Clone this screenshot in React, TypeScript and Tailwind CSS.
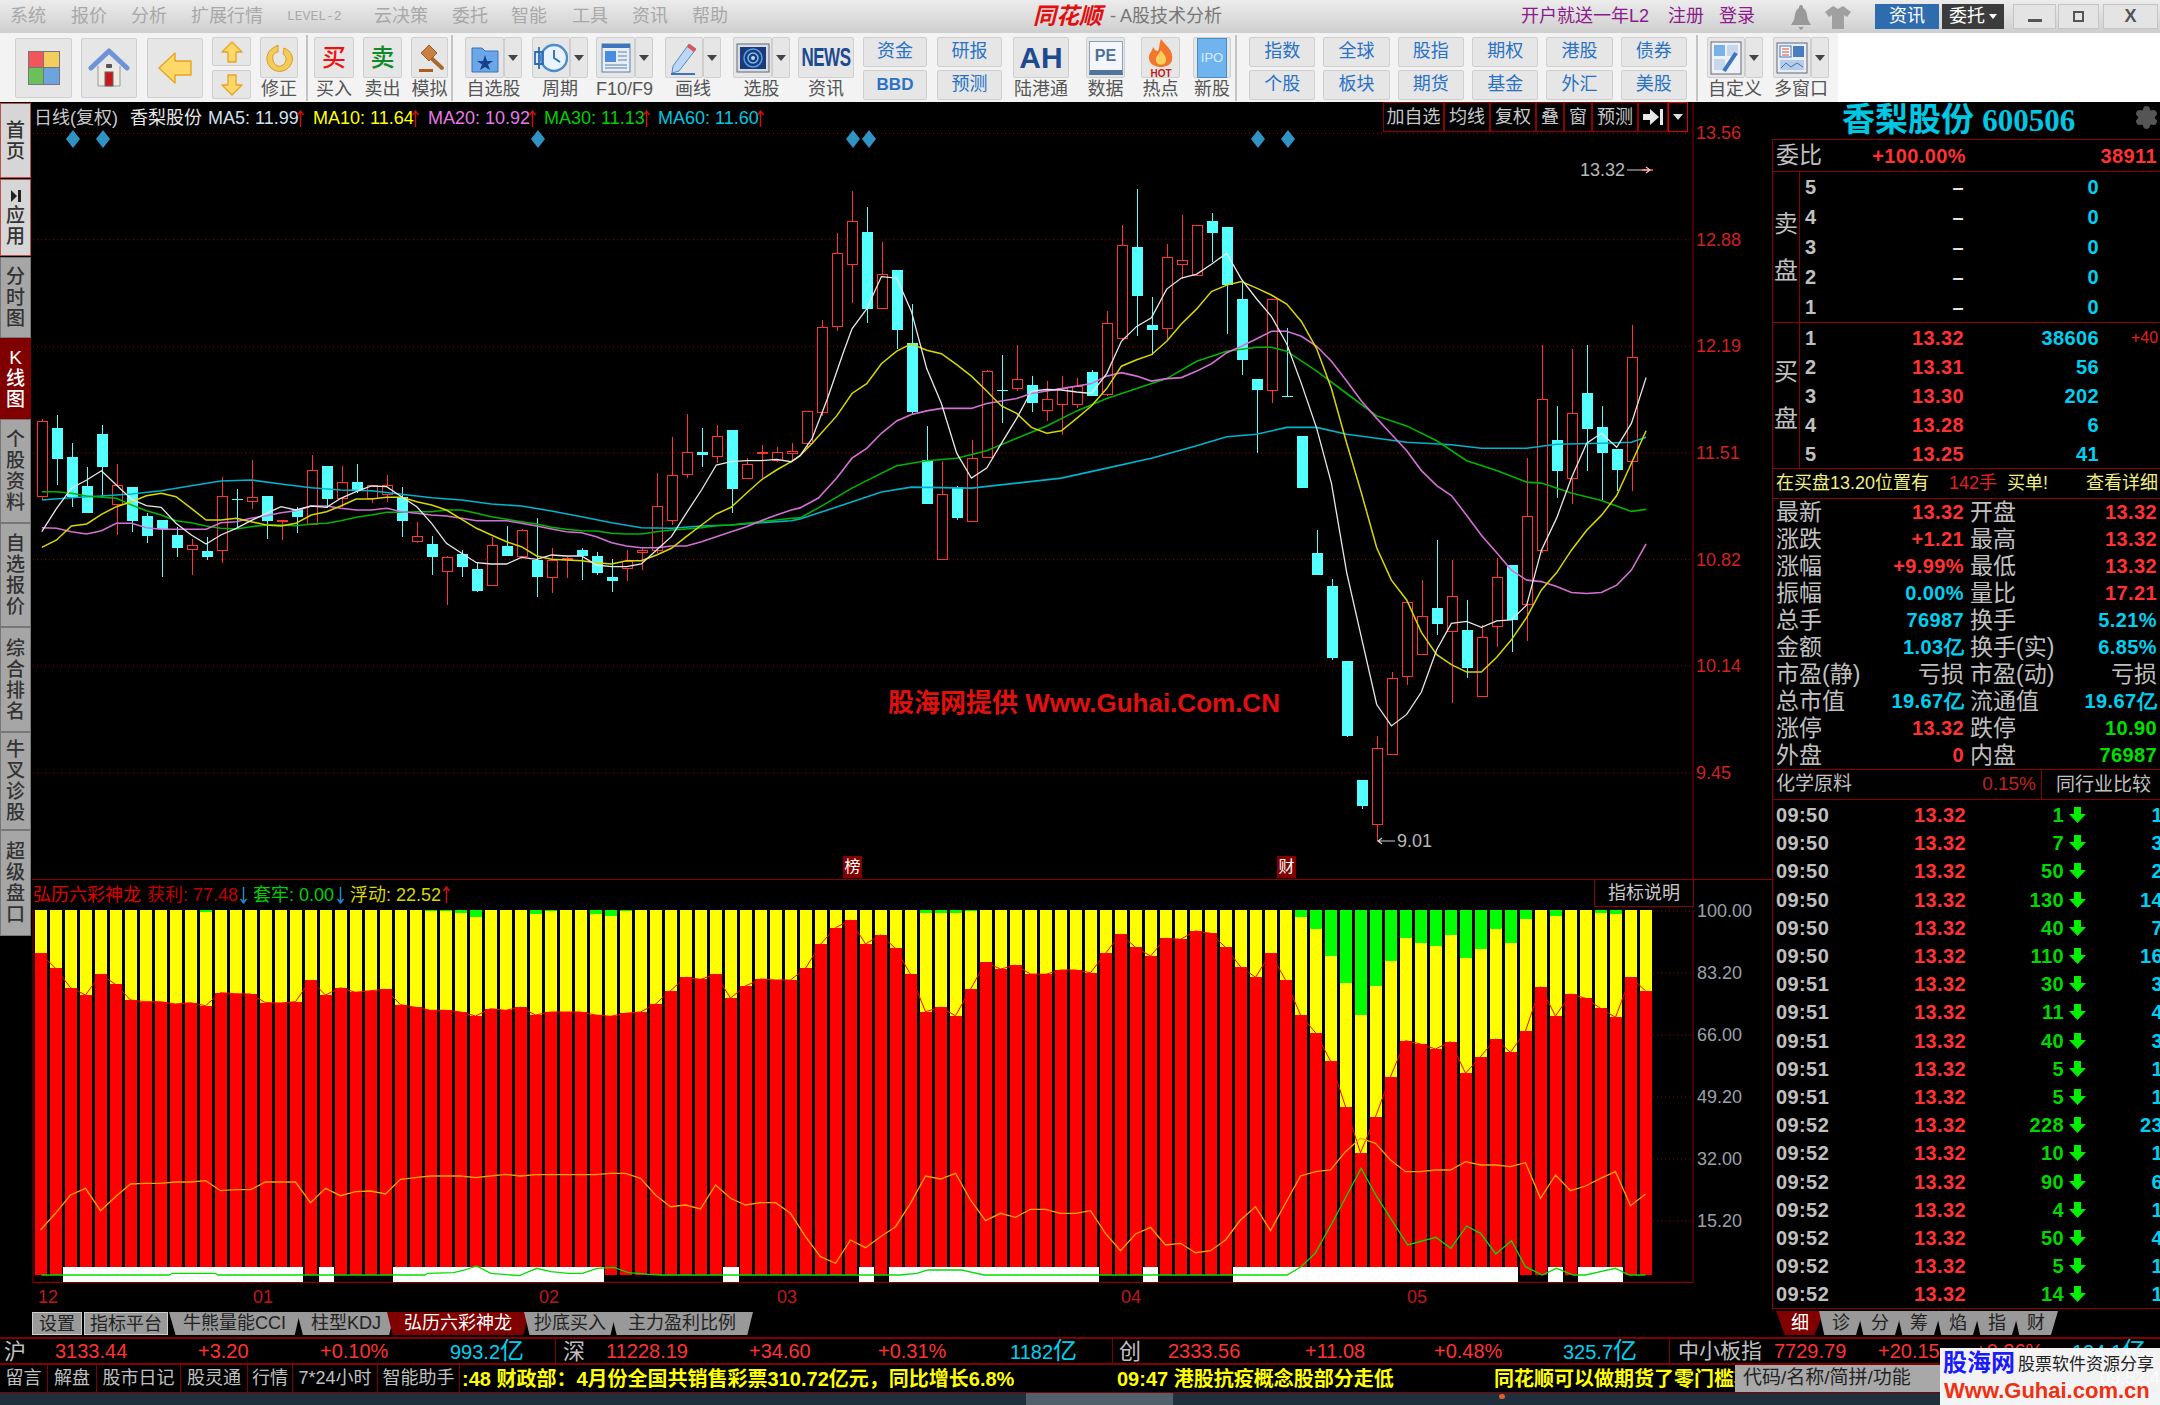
import React from "react";
import { Settings } from "lucide-react";

type C = [number, number, number, number, number];
// top, bottom, high, low, colour (0 red hollow, 1 cyan filled)
const candlesA: C[] = [
  [963,1190,958,1200,0],[985,1078,945,1155,1],[1070,1190,1030,1222,1],[1157,1238,1100,1240,1],[1003,1100,975,1190,1],[1157,1212,1092,1305,0],[1160,1263,1160,1295,1],[1247,1308,1240,1330,1],[1260,1288,1260,1430,1],[1305,1344,1280,1372,1],
  [1337,1348,1318,1425,0],[1354,1371,1312,1380,1],[1188,1352,1130,1390,0],[1197,1200,1168,1280,1],[1192,1203,1080,1228,0],[1188,1263,1188,1318,1],[1260,1264,1260,1320,0],[1228,1250,1220,1298,1],[1112,1272,1065,1275,0],[1097,1196,1097,1225,1],
  [1147,1195,1097,1222,0],[1147,1172,1092,1180,1],[1157,1195,1157,1210,0],[1157,1182,1125,1205,0],[1190,1263,1160,1312,1],[1310,1325,1265,1330,0],[1332,1372,1308,1425,1],[1373,1415,1368,1515,0],[1363,1402,1350,1430,1],[1408,1472,1385,1475,1],
  [1337,1455,1312,1458,0],[1337,1367,1278,1368,1],[1292,1370,1288,1375,0],[1380,1430,1255,1492,1],[1382,1433,1345,1480,0],[1375,1378,1370,1435,0],[1350,1367,1345,1440,1],[1368,1420,1355,1425,1],[1431,1443,1378,1475,1],[1383,1405,1350,1443,0],
  [1350,1357,1340,1410,0],[1220,1350,1120,1358,0],[1125,1262,1012,1275,0],[1057,1122,943,1135,0],[1057,1065,985,1100,1],[1008,1068,975,1090,0],[990,1168,990,1240,1],[1093,1135,1075,1135,0],[1056,1060,1035,1135,0],[1058,1080,1040,1085,0],[1054,1060,1030,1085,0],
];
const candlesB: C[] = [
  [627,690,627,700,0],[458,628,442,635,0],[308,456,268,465,0],[244,330,183,408,0],[265,420,216,448,1],[350,420,285,420,0],[341,462,341,500,1],[488,628,410,632,1],[724,812,656,812,1],[793,924,725,924,0],
  [778,840,775,845,1],[720,848,684,848,0],[546,718,543,720,0],[582,584,513,650,1],[562,580,492,585,0],[573,610,555,628,1],[603,625,565,645,0],[580,612,555,673,0],[575,612,558,620,0],[546,594,542,595,1],
  [449,592,425,595,0],[292,480,252,482,0],[295,393,178,475,1],[452,462,395,512,1],[317,460,290,480,0],[323,330,232,360,0],[253,352,253,352,0],[243,268,228,325,1],[256,372,256,470,1],[400,523,368,552,1],
  [561,583,561,710,1],[400,583,400,610,0],[594,596,458,596,1],[675,779,675,780,1],[910,955,865,955,1],[977,1122,962,1125,1],[1127,1278,1127,1280,1],[1366,1420,1366,1425,1],[1304,1457,1278,1490,0],[1162,1316,1150,1316,0],
  [1011,1158,1011,1175,0],[1038,1114,965,1114,0],[1022,1053,884,1075,1],[998,1068,925,1213,0],[1066,1142,1005,1162,1],[1080,1198,1055,1198,0],[960,1058,920,1100,0],[935,1045,935,1110,1],[838,1015,720,1088,0],[603,905,492,910,0],
  [684,746,615,800,1],[630,760,500,812,0],[588,661,492,745,1],[657,710,615,805,1],[702,743,702,785,1],[517,727,452,785,0],[139,141,139,141,0],
];
const yA = (v: number) => 100 + v / 3;
const yB = (v: number) => 100 + v * 0.4975;
const candleList = [
  ...candlesA.map((c) => [yA(c[0]), yA(c[1]), yA(c[2]), yA(c[3]), c[4]]),
  ...candlesB.map((c) => [yB(c[0]), yB(c[1]), yB(c[2]), yB(c[3]), c[4]]),
];

const ptsA = (a: number[]) => { const r: string[] = []; for (let i = 0; i < a.length; i += 2) r.push(`${(a[i] * 0.5102).toFixed(1)},${yA(a[i + 1]).toFixed(1)}`); return r; };
const ptsB = (a: number[]) => { const r: string[] = []; for (let i = 0; i < a.length; i += 2) r.push(`${(800 + a[i] * 0.6122).toFixed(1)},${yB(a[i + 1]).toFixed(1)}`); return r; };

const ma5 = [...ptsA([82,1295,111,1225,140,1165,170,1140,199,1112,228,1155,258,1198,287,1217,316,1222,345,1270,375,1305,404,1332,433,1305,463,1285,492,1262,522,1240,551,1220,580,1230,610,1218,640,1222,668,1195,698,1175,728,1158,758,1160,787,1190,817,1220,846,1270,875,1330,905,1360,934,1388,963,1392,993,1392,1022,1372,1052,1378,1081,1365,1110,1368,1140,1368,1169,1395,1199,1400,1228,1400,1257,1392,1287,1350,1316,1310,1345,1240,1375,1170,1404,1095,1433,1085,1463,1082,1492,1082,1522,1078,1551,1085]),
  ...ptsB([0,715,20,680,45,600,70,510,85,460,109,420,133,355,158,358,182,425,207,540,231,610,256,710,280,760,305,740,329,690,354,640,378,585,403,582,427,583,452,587,476,590,501,550,525,485,550,455,574,438,599,380,623,358,648,350,672,330,697,308,721,360,746,400,770,435,795,490,819,570,844,660,868,770,893,950,917,1080,942,1215,966,1258,991,1235,1015,1190,1040,1105,1064,1052,1089,1048,1113,1060,1138,1047,1162,1045,1187,1015,1211,905,1236,840,1260,760,1285,690,1309,670,1334,698,1358,650,1382,558])].join(" ");
const ma10 = [...ptsA([82,1342,111,1320,140,1278,170,1272,199,1243,228,1220,258,1205,287,1187,316,1180,345,1190,375,1225,404,1260,433,1260,463,1255,492,1265,522,1275,551,1278,580,1270,610,1245,640,1235,668,1218,698,1197,728,1197,758,1192,787,1192,817,1205,846,1215,875,1230,905,1258,934,1285,963,1305,993,1325,1022,1340,1052,1368,1081,1378,1110,1380,1140,1382,1169,1388,1199,1392,1228,1382,1257,1382,1287,1365,1316,1345,1345,1310,1375,1275,1404,1242,1433,1222,1463,1180,1492,1140,1522,1110,1551,1085]),
  ...ptsB([0,715,20,690,60,635,85,590,109,570,133,530,158,505,182,490,207,503,231,510,256,532,280,555,305,585,329,615,354,630,378,658,403,670,427,665,452,640,476,615,501,580,525,535,550,522,574,512,599,485,623,450,648,420,672,385,697,372,721,365,746,378,770,392,795,410,819,445,844,500,868,580,893,690,917,790,942,900,966,965,991,1005,1015,1070,1040,1115,1064,1135,1089,1150,1113,1150,1138,1120,1162,1085,1187,1040,1211,985,1236,950,1260,905,1285,865,1309,835,1334,795,1358,730,1382,665])].join(" ");
const ma20 = [...ptsA([82,1283,111,1285,140,1295,170,1302,199,1292,228,1270,258,1270,287,1283,316,1288,345,1288,375,1288,404,1288,433,1268,463,1265,492,1255,522,1247,551,1238,580,1232,610,1218,640,1218,668,1225,698,1230,728,1230,758,1225,787,1235,817,1240,846,1245,875,1248,905,1255,934,1262,963,1262,993,1262,1022,1270,1052,1278,1081,1287,1110,1295,1140,1298,1169,1310,1199,1328,1228,1338,1257,1343,1287,1343,1316,1338,1345,1338,1375,1325,1404,1310,1433,1295,1463,1280,1492,1262,1522,1245,1551,1230]),
  ...ptsB([0,820,30,800,60,760,85,720,109,700,133,670,158,645,182,632,207,625,231,620,256,620,280,620,305,610,329,605,354,600,378,590,403,585,427,580,452,575,476,570,501,555,525,548,550,555,574,565,599,560,623,558,648,545,672,530,697,508,721,495,746,480,770,465,795,465,819,475,844,495,868,525,893,565,917,605,942,640,966,672,991,705,1015,745,1040,775,1064,795,1089,835,1113,875,1138,910,1162,945,1187,965,1211,968,1236,978,1260,990,1285,992,1309,990,1334,975,1358,945,1382,892])].join(" ");
const ma30 = [...ptsA([82,1175,111,1175,140,1180,170,1188,199,1192,228,1195,258,1215,287,1232,316,1245,345,1262,375,1268,404,1278,433,1285,463,1287,492,1280,522,1275,551,1275,580,1277,610,1272,640,1270,668,1262,698,1252,728,1245,758,1237,787,1237,817,1235,846,1235,875,1230,905,1230,934,1240,963,1250,993,1258,1022,1265,1052,1272,1081,1282,1110,1288,1140,1292,1169,1293,1199,1300,1228,1302,1257,1302,1287,1295,1316,1290,1345,1287,1375,1283,1404,1277,1433,1275,1463,1270,1492,1265,1522,1260,1551,1255]),
  ...ptsB([0,840,30,820,85,780,109,765,158,735,207,725,256,720,305,705,354,680,403,655,452,625,501,600,550,580,599,560,648,525,697,505,746,497,770,497,795,505,844,545,893,590,942,635,991,655,1040,685,1089,725,1138,745,1187,768,1211,770,1260,790,1309,805,1358,827,1382,823])].join(" ");
const ma60 = [...ptsA([82,1200,140,1193,199,1188,258,1182,316,1172,375,1157,433,1143,492,1140,551,1152,610,1163,668,1170,728,1172,787,1183,846,1193,905,1200,963,1212,1022,1218,1081,1233,1140,1250,1199,1268,1257,1283,1316,1285,1375,1278,1433,1275,1492,1268,1551,1262]),
  ...ptsB([0,842,60,818,133,788,182,778,280,780,354,770,427,760,501,740,574,720,648,695,697,677,746,672,795,658,844,658,893,672,942,680,991,688,1064,693,1113,700,1187,700,1236,692,1309,690,1358,688,1382,678])].join(" ");

const redTop = [220,265,323,345,283,313,360,365,365,372,368,377,338,341,342,368,369,365,300,345,323,337,332,328,374,382,391,391,396,408,386,391,382,405,396,396,396,405,409,400,396,372,332,292,298,283,354,318,297,300,300,265,193,143,120,192,165,205,283,395,382,407,328,247,267,256,282,283,270,270,278,220,162,202,228,175,178,153,160,202,260,292,220,300,405,458,543,680,818,710,590,482,492,507,485,580,530,477,517,453,320,408,342,355,385,412,292,332];
const greenMap: Record<number, number> = {11:95,26:93,27:93,28:100,29:112,33:103,34:93,37:103,38:107,39:93,59:100,60:100,61:100,62:93,84:112,85:148,86:228,87:310,88:405,89:318,90:242,91:175,92:188,93:197,94:165,95:233,96:207,97:148,98:188,99:117,101:107,104:98,105:103};
const orange = [1050,1000,945,925,992,950,912,910,910,906,906,902,932,929,929,906,906,906,968,925,947,935,933,942,898,893,888,888,888,893,888,883,888,884,884,884,884,884,880,880,895,945,980,975,987,915,955,975,968,968,1000,1070,1130,1150,1080,1103,1070,1040,970,888,897,880,960,1022,1000,1012,988,988,1000,1000,992,1060,1112,1062,1042,1095,1090,1118,1112,1080,1020,980,1052,970,888,875,870,815,775,790,840,875,875,870,870,845,855,855,860,848,955,885,932,918,895,875,977,942];
const yL = (v: number) => 880 + v / 3;
const barX = (i: number) => 40.5 + 15 * i;
const orangeLine = orange.map((v, i) => `${barX(i)},${yL(v).toFixed(1)}`).join(" ");
const redLine = redTop.map((v, i) => `${barX(i)},${yL(v).toFixed(1)}`).join(" ");
const greenLine = [
  ...[72,1185,295,1185,300,1180,375,1180,380,1185,740,1185,745,1180,790,1178,810,1170,830,1158,855,1180,905,1187,935,1165,960,1175,990,1180,1015,1180,1040,1165,1070,1162,1095,1178,1130,1183,1150,1185,1568,1185].reduce<string[]>((r, v, i, a) => { if (i % 2 === 0) r.push(`${(v * 0.574).toFixed(1)},${yL(a[i + 1]).toFixed(1)}`); return r; }, []),
  ...[0,1185,30,1180,50,1170,110,1170,150,1185,690,1185,715,1160,740,1120,770,1030,822,865,850,950,905,1095,955,1072,982,1105,1010,1038,1035,1060,1062,1122,1090,1082,1115,1160,1145,1185,1170,1165,1200,1185,1222,1185,1275,1165,1300,1185,1329,1185].reduce<string[]>((r, v, i, a) => { if (i % 2 === 0) r.push(`${(900 + v * 0.561).toFixed(1)},${yL(a[i + 1]).toFixed(1)}`); return r; }, []),
].join(" ");
const whites = [[63,240],[319,15],[393,211],[723,16],[859,15],[889,210],[1143,15],[1233,285],[1548,15],[1578,45]];

function MainChart() {
  return (
    <svg width="1740" height="778" viewBox="32 102 1740 778" className="absolute left-0 top-0">
      {[133.3,239.8,346.3,453,559.7,666,773].map((y) => (
        <line key={y} x1="33" x2="1693" y1={y} y2={y} stroke="#a00000" strokeWidth="1" strokeDasharray="1 3" />
      ))}
      <line x1="1693" x2="1693" y1="102" y2="880" stroke="#8c0000" />
      <line x1="32" x2="1772" y1="879.5" y2="879.5" stroke="#8c0000" />
      {[73,103,538,853,869,1258,1288].map((x) => (
        <polygon key={x} points={`${x},130 ${x + 7},139 ${x},148 ${x - 7},139`} fill="#2f93c4" />
      ))}
      <g shapeRendering="crispEdges">
        {candleList.map((c, i) => {
          const x = Math.round(41.5 + 15 * i);
          const col = c[4] ? "#54ffff" : "#ff3232";
          return (
            <g key={i}>
              <line x1={x + 0.5} x2={x + 0.5} y1={c[2]} y2={c[3]} stroke={col} />
              <rect x={x - 5} y={c[0]} width={c[4] ? 11 : 10} height={Math.max(c[1] - c[0], 1)} fill={c[4] ? col : "#000"} stroke={c[4] ? "none" : col} />
            </g>
          );
        })}
      </g>
      <polyline points={ma60} fill="none" stroke="#00b4cc" strokeWidth="1.6" />
      <polyline points={ma30} fill="none" stroke="#00b400" strokeWidth="1.6" />
      <polyline points={ma20} fill="none" stroke="#d470d4" strokeWidth="1.6" />
      <polyline points={ma10} fill="none" stroke="#d8d800" strokeWidth="1.5" />
      <polyline points={ma5} fill="none" stroke="#e8e8e8" strokeWidth="1.3" />
      <path d="M1627 170H1650M1646 167L1650 170L1646 173" fill="none" stroke="#d0d0d0" strokeWidth="1.2" />
      <path d="M1395 841H1378M1382 838L1378 841L1382 844" fill="none" stroke="#d0d0d0" strokeWidth="1.2" />
    </svg>
  );
}

function LowerChart() {
  return (
    <svg width="1740" height="373" viewBox="32 910 1740 373" className="absolute left-0 top-0">
      {[911,973,1035,1097,1159,1221].map((y) => (
        <line key={y} x1="1653" x2="1694" y1={y} y2={y} stroke="#a00000" strokeDasharray="1 3" />
      ))}
      <line x1="1693" x2="1693" y1="910" y2="1283" stroke="#8c0000" />
      <line x1="33" x2="33" y1="910" y2="1283" stroke="#8c0000" />
      <line x1="33" x2="1693" y1="1282.5" y2="1282.5" stroke="#8c0000" strokeWidth="1.5" />
      <g shapeRendering="crispEdges">
        {redTop.map((t, i) => {
          const x = 34.5 + 15 * i;
          const top = yL(88);
          const r = yL(t);
          const g = greenMap[i] ? yL(greenMap[i]) : top;
          return (
            <g key={i}>
              <rect x={x} y={top} width="12" height={g - top} fill="#00ff00" />
              <rect x={x} y={g} width="12" height={r - g} fill="#ffff00" />
              <rect x={x} y={r} width="12" height={1275 - r} fill="#ff0000" />
            </g>
          );
        })}
        {whites.map((w) => (
          <rect key={w[0]} x={w[0]} y="1267" width={w[1]} height="15" fill="#ffffff" />
        ))}
      </g>
      <polyline points={redLine} fill="none" stroke="#ff0000" strokeWidth="1" />
      <polyline points={orangeLine} fill="none" stroke="#ffa500" strokeWidth="1.3" />
      <polyline points={greenLine} fill="none" stroke="#00e000" strokeWidth="1.3" />
    </svg>
  );
}

const Arrow = ({ up, blue }: { up?: boolean; blue?: boolean }) => (
  <svg width="9" height="18" viewBox="0 0 9 18" className="inline-block">
    {up ? <path d="M4.5 1V17M1.5 5L4.5 1L7.5 5" fill="none" stroke="#d01010" strokeWidth="1.4" /> : <path d="M4.5 1V17M1.5 13L4.5 17L7.5 13" fill="none" stroke={blue ? "#1e90d0" : "#d01010"} strokeWidth="1.4" />}
  </svg>
);
const GreenDown = () => (
  <svg width="17" height="16" viewBox="0 0 17 16"><path d="M5 0H12V7H17L8.5 16L0 7H5Z" fill="#00f000" /></svg>
);
const Caret = () => <svg width="10" height="6" viewBox="0 0 10 6"><path d="M0 0H10L5 6Z" fill="#444" /></svg>;

const GridIcon = () => (
  <svg width="32" height="34" viewBox="0 0 32 34" shapeRendering="crispEdges">
    <rect width="32" height="34" fill="#777" />
    <rect x="1" y="1" width="14" height="15" fill="#f2565a" /><rect x="16" y="1" width="15" height="15" fill="#f2cf5c" />
    <rect x="1" y="17" width="14" height="16" fill="#6cc05c" /><rect x="16" y="17" width="15" height="16" fill="#6ba4de" />
  </svg>
);
const HomeIcon = () => (
  <svg width="42" height="42" viewBox="0 0 42 42">
    <path d="M10 19V39H32V19" fill="#eeeae4" stroke="#999" /><rect x="17" y="25" width="8" height="14" fill="#c8181c" stroke="#666" /><rect x="18" y="17" width="6" height="4" fill="#555" rx="1" />
    <path d="M3 21L21 4L39 21" fill="none" stroke="#6f93d8" strokeWidth="5" strokeLinecap="round" strokeLinejoin="round" />
  </svg>
);
const BackIcon = () => (
  <svg width="34" height="34" viewBox="0 0 34 34"><path d="M1 17L17 2V10H33V24H17V32Z" fill="#ffd868" stroke="#e6a420" strokeWidth="1.4" strokeLinejoin="round" /></svg>
);
const UpIcon = ({ down }: { down?: boolean }) => (
  <svg width="22" height="22" viewBox="0 0 22 22" className={down ? "rotate-180" : ""}><path d="M11 1L21 11H15V21H7V11H1Z" fill="#ffd868" stroke="#e6a420" strokeWidth="1.3" strokeLinejoin="round" /></svg>
);
const FixIcon = () => (
  <svg width="30" height="30" viewBox="0 0 30 30"><path d="M9 5C2 9 1 18 6 24S21 30 26 23S28 8 20 5L19 11C23 13 23 19 19 22S10 22 9 17S10 10 14 9L14 2L9 5Z" fill="#f3cb58" stroke="#d89b28" /></svg>
);
const Gavel = () => (
  <svg width="30" height="30" viewBox="0 0 30 30"><path d="M14 13L27 25" stroke="#a86a30" strokeWidth="4" strokeLinecap="round" /><path d="M6 10L14 2L22 10L14 18Z" fill="#c98040" stroke="#9a5f28" /><rect x="4" y="26" width="14" height="3" fill="#b05a20" /></svg>
);
const FolderIcon = () => (
  <svg width="30" height="32" viewBox="0 0 30 32"><path d="M2 6H12L15 9H28V30H2Z" fill="#6ba7e8" stroke="#3a74b8" /><path d="M15 13L17 19H23L18 22.5L20 28L15 25L10 28L12 22.5L7 19H13Z" fill="#14408c" /></svg>
);
const ClockIcon = () => (
  <svg width="34" height="32" viewBox="0 0 34 32"><circle cx="20" cy="16" r="13" fill="#eaf3fb" stroke="#4a8ccc" strokeWidth="2.4" /><path d="M20 8V16L26 20" fill="none" stroke="#2a6cb0" strokeWidth="1.8" /><path d="M5 5V27M1 10H9V22H1Z" fill="none" stroke="#2a6cb0" strokeWidth="1.8" /></svg>
);
const DocIcon = () => (
  <svg width="30" height="32" viewBox="0 0 30 32"><rect x="1" y="2" width="28" height="28" fill="#e8eef6" stroke="#5a7ea8" /><rect x="1" y="2" width="28" height="4" fill="#3c74c0" /><rect x="4" y="9" width="11" height="11" fill="#4a8ce0" /><path d="M17 10H26M17 14H26M17 18H26M4 23H26M4 26H26" stroke="#5a7ea8" /></svg>
);
const PenIcon = () => (
  <svg width="30" height="34" viewBox="0 0 30 34"><path d="M20 3L27 8L10 30L3 32L4 25Z" fill="#bcd8f4" stroke="#5a88bc" /><path d="M20 3L27 8L25 11L18 6Z" fill="#e85050" /><path d="M2 33H26" stroke="#3c74c0" strokeWidth="2" /></svg>
);
const RadarIcon = () => (
  <svg width="34" height="32" viewBox="0 0 34 32"><rect x="1" y="2" width="32" height="28" fill="#d8dde4" stroke="#667" /><rect x="4" y="5" width="26" height="22" fill="#1c3a78" /><circle cx="17" cy="16" r="9" fill="none" stroke="#4ea0e8" strokeWidth="1.5" /><circle cx="17" cy="16" r="5" fill="none" stroke="#7cc0f4" strokeWidth="1.5" /><circle cx="17" cy="16" r="2" fill="#bde" /></svg>
);
const PeIcon = () => (
  <div className="w-[34px] h-[34px] bg-[#f4f6fa] border border-[#8ca0bc] border-b-[5px] border-b-[#50749c] flex items-center justify-center text-[#4a6ea0] text-[16px] font-bold">PE</div>
);
const HotIcon = () => (
  <svg width="34" height="40" viewBox="0 0 34 40"><path d="M17 1C21 7 30 12 28 22C27 27 22 29 17 29S6 27 5 21C4 16 8 14 9 9C11 12 12 13 14 13C16 9 15 5 17 1Z" fill="#f2762c" /><path d="M17 12C19 16 23 18 22 23S13 28 12 23S15 17 17 12Z" fill="#fbd060" /><text x="17" y="39" fontSize="10" fontWeight="700" textAnchor="middle" fill="#c81818" fontFamily="Liberation Sans">HOT</text></svg>
);
const IpoIcon = () => (
  <div className="w-[30px] h-[40px] bg-[#6fb4ee] border border-[#4a8cc8] flex items-center justify-center text-[#d8ecfc] text-[13px]">IPO</div>
);
const CustomIcon = () => (
  <svg width="32" height="34" viewBox="0 0 32 34"><rect x="1" y="1" width="30" height="32" fill="#eef2f8" stroke="#667" /><rect x="4" y="4" width="11" height="11" fill="#7ab0e8" /><rect x="17" y="4" width="11" height="11" fill="#c8d8ec" /><rect x="4" y="18" width="11" height="11" fill="#c8d8ec" /><path d="M26 12L14 30" stroke="#3c74c0" strokeWidth="4" /></svg>
);
const MultiIcon = () => (
  <svg width="32" height="32" viewBox="0 0 32 32"><rect x="1" y="1" width="30" height="30" fill="#e8eef6" stroke="#667" /><rect x="4" y="4" width="11" height="11" fill="#fff" stroke="#3c74c0" /><path d="M6 7H13M6 10H13M6 13H13" stroke="#d04040" /><rect x="17" y="4" width="11" height="11" fill="#4a7cc0" /><rect x="4" y="18" width="24" height="10" fill="#b8cce8" /><path d="M5 26L10 21L15 25L21 21L27 25" fill="none" stroke="#3c74c0" /></svg>
);

const Btn = ({ className = "", children }: { className?: string; children?: React.ReactNode }) => (
  <div className={`bg-[#e6e6e6] border border-[#cfcfcf] rounded-[2px] flex items-center justify-center shrink-0 ${className}`}>{children}</div>
);
const Tool = ({ cls, icon, label, drop }: { cls: string; icon: React.ReactNode; label: string; drop?: boolean }) => (
  <div className={`flex flex-col items-stretch shrink-0 ${cls}`}>
    <div className="flex h-[41px]">
      <Btn className="flex-1 h-full">{icon}</Btn>
      {drop && <Btn className="w-[18px] h-full"><Caret /></Btn>}
    </div>
    <div className="text-center text-[18px] leading-[20px] mt-[1px] text-[#555] whitespace-nowrap">{label}</div>
  </div>
);
const Sep = ({ cls }: { cls: string }) => <div className={`w-[2px] h-[66px] bg-[#c4c4c4] shrink-0 ${cls}`} />;
const BlueStack = ({ cls, a, b, bold }: { cls: string; a: string; b: string; bold?: boolean }) => (
  <div className={`flex flex-col gap-[3px] shrink-0 ${cls}`}>
    <Btn className="h-[30px] text-[18px] text-[#2a72c4]">{a}</Btn>
    <Btn className={`h-[30px] text-[#2a72c4] ${bold ? "text-[17px] font-bold" : "text-[18px]"}`}>{b}</Btn>
  </div>
);

function TitleBar() {
  const menu: [string, string][] = [["系统","w-[71px] pl-[10px]"],["报价","w-[60px]"],["分析","w-[60px]"],["扩展行情","w-[96px]"],["LEVEL-2","w-[87px]"],["云决策","w-[78px]"],["委托","w-[59px]"],["智能","w-[61px]"],["工具","w-[60px]"],["资讯","w-[60px]"],["帮助","w-[60px]"]];
  return (
    <div className="h-[30px] pt-[3px] bg-gradient-to-b from-[#ececec] to-[#d2d2d2] flex items-center text-[#a8a8a8] text-[18px] whitespace-nowrap overflow-hidden shrink-0">
      {menu.map(([t, c]) => (
        <span key={t} className={`shrink-0 ${c} ${t === "LEVEL-2" ? "text-[13px] font-['Liberation_Mono',monospace]" : ""}`}>{t}</span>
      ))}
      <span className="ml-[281px] w-[72px] text-[23px] font-bold italic text-[#e01010] shrink-0">同花顺</span>
      <span className="ml-[5px] text-[#777] w-[411px] shrink-0">- A股技术分析</span>
      <span className="w-[147px] text-[#8c1a8c] shrink-0">开户就送一年L2</span>
      <span className="w-[51px] text-[#8c1a8c] shrink-0">注册</span>
      <span className="w-[71px] text-[#8c1a8c] shrink-0">登录</span>
      <svg width="22" height="26" viewBox="0 0 22 26" className="shrink-0"><path d="M11 1C13 1 13 3 13 4C17 6 17 12 18 16L21 21H1L4 16C5 12 5 6 9 4C9 3 9 1 11 1ZM8 23H14L11 26Z" fill="#999" /></svg>
      <svg width="28" height="26" viewBox="0 0 28 26" className="ml-[12px] shrink-0"><path d="M9 2L14 5L19 2L27 8L23 13L20 11V25H8V11L5 13L1 8Z" fill="#a0a0a0" /></svg>
      <div className="ml-[23px] w-[64px] h-[25px] bg-[#2f6cae] text-white flex items-center justify-center shrink-0">资讯</div>
      <div className="ml-[3px] w-[62px] h-[25px] bg-[#3c3c3c] text-white flex items-center justify-center gap-[4px] shrink-0">委托<svg width="8" height="5" viewBox="0 0 8 5"><path d="M0 0H8L4 5Z" fill="#fff" /></svg></div>
      <div className="ml-[9px] w-[43px] h-[25px] bg-[#e4e4e4] border border-[#c4c4c4] flex items-center justify-center shrink-0"><span className="w-[14px] h-[3px] bg-[#555] mt-[8px]" /></div>
      <div className="ml-[2px] w-[41px] h-[25px] bg-[#e4e4e4] border border-[#c4c4c4] flex items-center justify-center shrink-0"><span className="w-[11px] h-[11px] border-2 border-[#555]" /></div>
      <div className="ml-[4px] w-[55px] h-[25px] bg-[#e4e4e4] border border-[#c4c4c4] flex items-center justify-center text-[#555] font-bold shrink-0">X</div>
    </div>
  );
}

function Toolbar() {
  return (
    <div className="h-[72px] bg-white flex shrink-0 border-t-[3px] border-t-[#cfcfcf]">
      <div className="w-[1838px] bg-[#f3f3f3] flex items-center pt-[1px] shrink-0">
        <Btn className="ml-[15px] w-[57px] h-[60px]"><GridIcon /></Btn>
        <Btn className="ml-[9px] w-[56px] h-[60px]"><HomeIcon /></Btn>
        <Btn className="ml-[10px] w-[56px] h-[60px]"><BackIcon /></Btn>
        <div className="ml-[9px] w-[39px] flex flex-col gap-[4px] shrink-0">
          <Btn className="h-[29px]"><UpIcon /></Btn>
          <Btn className="h-[29px]"><UpIcon down /></Btn>
        </div>
        <Tool cls="ml-[9px] w-[38px]" icon={<FixIcon />} label="修正" />
        <Sep cls="ml-[8px]" />
        <Tool cls="ml-[6px] w-[40px]" icon={<span className="text-[24px] font-medium text-[#f01010]">买</span>} label="买入" />
        <Tool cls="ml-[9px] w-[39px]" icon={<span className="text-[24px] font-medium text-[#108a28]">卖</span>} label="卖出" />
        <Tool cls="ml-[9px] w-[37px]" icon={<Gavel />} label="模拟" />
        <Sep cls="ml-[3px]" />
        <Tool cls="ml-[12px] w-[57px]" icon={<FolderIcon />} label="自选股" drop />
        <Tool cls="ml-[10px] w-[56px]" icon={<ClockIcon />} label="周期" drop />
        <Tool cls="ml-[8px] w-[57px]" icon={<DocIcon />} label="F10/F9" drop />
        <Tool cls="ml-[12px] w-[56px]" icon={<PenIcon />} label="画线" drop />
        <Tool cls="ml-[12px] w-[57px]" icon={<RadarIcon />} label="选股" drop />
        <Tool cls="ml-[8px] w-[56px]" icon={<span className="text-[17px] font-black text-[#1c4a90] font-['Liberation_Sans'] tracking-[-0.5px] scale-y-150">NEWS</span>} label="资讯" />
        <BlueStack cls="ml-[9px] w-[64px]" a="资金" b="BBD" bold />
        <BlueStack cls="ml-[10px] w-[65px]" a="研报" b="预测" />
        <Tool cls="ml-[11px] w-[56px]" icon={<span className="text-[30px] font-bold text-[#1c4a90] font-['Liberation_Sans']">AH</span>} label="陆港通" />
        <Tool cls="ml-[17px] w-[39px]" icon={<PeIcon />} label="数据" />
        <Tool cls="ml-[16px] w-[39px]" icon={<HotIcon />} label="热点" />
        <Tool cls="ml-[13px] w-[38px]" icon={<IpoIcon />} label="新股" />
        <Sep cls="ml-[4px]" />
        <div className="ml-[12px] grid grid-cols-6 gap-x-[8px] gap-y-[3px] w-[438px] shrink-0">
          {["指数","全球","股指","期权","港股","债券","个股","板块","期货","基金","外汇","美股"].map((t) => (
            <Btn key={t} className="h-[30px] text-[18px] text-[#2a72c4]">{t}</Btn>
          ))}
        </div>
        <Sep cls="ml-[9px]" />
        <Tool cls="ml-[9px] w-[56px]" icon={<CustomIcon />} label="自定义" drop />
        <Tool cls="ml-[10px] w-[56px]" icon={<MultiIcon />} label="多窗口" drop />
      </div>
    </div>
  );
}

function Sidebar() {
  const tabs: [string[], string, string][] = [
    [["首","页"],"h-[75px]","bg-[#d6d6d6] text-[#333] border-[#b85050]"],
    [["应","用"],"h-[77px] mt-[1px]","bg-[#d6d6d6] text-[#333] border-[#b85050]"],
    [["分","时","图"],"h-[81px] mt-[1px]","bg-[#a6a6a6] text-[#333] border-[#777]"],
    [["K","线","图"],"h-[81px]","bg-[#800000] text-white border-[#800000]"],
    [["个","股","资","料"],"h-[104px]","bg-[#a6a6a6] text-[#333] border-[#777]"],
    [["自","选","报","价"],"h-[104px]","bg-[#a6a6a6] text-[#333] border-[#777]"],
    [["综","合","排","名"],"h-[105px]","bg-[#a6a6a6] text-[#333] border-[#777]"],
    [["牛","叉","诊","股"],"h-[98px]","bg-[#a6a6a6] text-[#333] border-[#777]"],
    [["超","级","盘","口"],"h-[106px]","bg-[#a6a6a6] text-[#333] border-[#777]"],
  ];
  return (
    <div className="w-[32px] pr-[1px] flex flex-col pt-[1px] shrink-0">
      {tabs.map(([chars, h, c], i) => (
        <div key={i} className={`w-full border flex flex-col items-center justify-center text-[19px] leading-[21px] font-medium ${h} ${c}`}>
          {i === 1 && <svg width="12" height="14" viewBox="0 0 12 14" className="mb-[2px]"><path d="M1 1L7 7L1 13ZM8 1H11V13H8Z" fill="#222" /></svg>}
          {chars.map((ch, j) => <span key={j}>{ch}</span>)}
        </div>
      ))}
    </div>
  );
}

const ToolTab = ({ cls, children }: { cls: string; children: React.ReactNode }) => (
  <div className={`h-[30px] border border-[#8c0000] flex items-center justify-center text-[#c8c8c8] text-[18px] shrink-0 ${cls}`}>{children}</div>
);

function ChartColumn() {
  const priceLabels: [string, string][] = [["13.56","top-[20px]"],["12.88","top-[127px]"],["12.19","top-[233px]"],["11.51","top-[340px]"],["10.82","top-[447px]"],["10.14","top-[553px]"],["9.45","top-[660px]"]];
  const lowLabels: [string, string][] = [["100.00","top-[-10px]"],["83.20","top-[52px]"],["66.00","top-[114px]"],["49.20","top-[176px]"],["32.00","top-[238px]"],["15.20","top-[300px]"]];
  const months: [string, string][] = [["12","w-[215px]"],["01","w-[286px]"],["02","w-[238px]"],["03","w-[344px]"],["04","w-[286px]"],["05","w-[60px]"]];
  return (
    <div className="w-[1740px] flex flex-col shrink-0">
      <div className="relative h-[778px]">
        <MainChart />
        <div className="absolute left-[2px] top-[3px] flex items-center text-[18px] whitespace-nowrap">
          <span className="text-[#c8c8c8] w-[96px]">日线(复权)</span>
          <span className="text-[#e8e8e8] w-[78px]">香梨股份</span>
          <span className="text-[#cfe0f0] w-[88px]">MA5: 11.99</span><Arrow up />
          <span className="text-[#ffff00] w-[98px] ml-[8px]">MA10: 11.64</span><Arrow up />
          <span className="text-[#e878e8] w-[100px] ml-[8px]">MA20: 10.92</span><Arrow up />
          <span className="text-[#00d000] w-[98px] ml-[7px]">MA30: 11.13</span><Arrow up />
          <span className="text-[#00c8e0] w-[98px] ml-[7px]">MA60: 11.60</span><Arrow up />
        </div>
        <div className="absolute left-[1351px] top-0 flex">
          <ToolTab cls="w-[61px]">加自选</ToolTab>
          <ToolTab cls="w-[46px]">均线</ToolTab>
          <ToolTab cls="w-[46px]">复权</ToolTab>
          <ToolTab cls="w-[28px]">叠</ToolTab>
          <ToolTab cls="w-[28px]">窗</ToolTab>
          <ToolTab cls="w-[46px]">预测</ToolTab>
          <ToolTab cls="w-[30px]"><svg width="22" height="18" viewBox="0 0 22 18"><path d="M1 6H8V1L17 9L8 17V12H1ZM18 1H21V17H18Z" fill="#e8e8e8" /></svg></ToolTab>
          <div className="w-[20px] h-[30px] border border-[#e00000] flex items-center justify-center"><svg width="10" height="6" viewBox="0 0 10 6"><path d="M0 0H10L5 6Z" fill="#ddd" /></svg></div>
        </div>
        {priceLabels.map(([t, c]) => (
          <span key={t} className={`absolute left-[1664px] text-[18px] leading-[22px] text-[#d02020] ${c}`}>{t}</span>
        ))}
        <span className="absolute left-[1548px] top-[57px] text-[18px] leading-[22px] text-[#b8b8b8]">13.32</span>
        <span className="absolute left-[1365px] top-[728px] text-[18px] leading-[22px] text-[#b8b8b8]">9.01</span>
        <span className="absolute left-[856px] top-[584px] text-[26px] leading-[34px] font-bold text-[#e01010] whitespace-nowrap">股海网提供 Www.Guhai.Com.CN</span>
        <span className="absolute left-[811px] top-[754px] w-[19px] h-[22px] bg-[#800000] text-white text-[16px] leading-[22px] text-center">榜</span>
        <span className="absolute left-[1245px] top-[754px] w-[19px] h-[22px] bg-[#800000] text-white text-[16px] leading-[22px] text-center">财</span>
      </div>
      <div className="relative h-[30px] flex items-center pl-[1px] text-[18px] whitespace-nowrap">
        <span className="text-[#e00000] w-[114px]">弘历六彩神龙</span>
        <span className="text-[#c00000] w-[92px]">获利: 77.48</span><Arrow blue />
        <span className="text-[#00d000] w-[83px] ml-[5px]">套牢: 0.00</span><Arrow blue />
        <span className="text-[#d8d800] w-[92px] ml-[5px]">浮动: 22.52</span><Arrow up />
        <div className="absolute left-[1562px] top-0 w-[100px] h-[27px] border border-[#8c0000] border-t-0 flex items-center justify-center text-[#c8c8c8]">指标说明</div>
      </div>
      <div className="relative h-[373px]">
        <LowerChart />
        {lowLabels.map(([t, c]) => (
          <span key={t} className={`absolute left-[1665px] text-[18px] leading-[22px] text-[#9aa0a8] ${c}`}>{t}</span>
        ))}
      </div>
      <div className="h-[29px] flex items-center pl-[6px] text-[18px] text-[#c01818]">
        {months.map(([t, c]) => <span key={t} className={c}>{t}</span>)}
      </div>
      <div className="h-[23px] flex items-stretch text-[18px] leading-[23px] text-[#222] whitespace-nowrap">
        <div className="w-[50px] bg-[#999] border border-[#ccc] text-center">设置</div>
        <div className="w-[84px] ml-[2px] bg-[#999] border border-[#ccc] text-center">指标平台</div>
        <div className="w-[131px] ml-[1px] bg-[#999] text-center [clip-path:polygon(0_0,100%_0,96%_100%,5%_100%)]">牛熊量能CCI</div>
        <div className="w-[98px] -ml-[3px] bg-[#999] text-center [clip-path:polygon(0_0,100%_0,94%_100%,6%_100%)]">柱型KDJ</div>
        <div className="w-[142px] -ml-[8px] bg-[#800000] text-white text-center [clip-path:polygon(0_0,100%_0,96%_100%,4%_100%)]">弘历六彩神龙</div>
        <div className="w-[92px] -ml-[5px] bg-[#999] text-center [clip-path:polygon(0_0,100%_0,94%_100%,6%_100%)]">抄底买入</div>
        <div className="w-[142px] -ml-[5px] bg-[#999] text-center [clip-path:polygon(0_0,100%_0,96%_100%,4%_100%)]">主力盈利比例</div>
      </div>
    </div>
  );
}

const Num = "font-bold text-[20px] tracking-[0.4px] font-['Liberation_Sans',sans-serif]";

function Book({ title, rows, rowH }: { title: string[]; rows: [string, string, string, string?][]; rowH: string }) {
  return (
    <div className="flex border-b border-b-[#8c0000]">
      <div className="w-[27px] border-r border-r-[#8c0000] flex flex-col items-center justify-center gap-[23px] text-[#c0c0c0] text-[24px] leading-[24px] shrink-0">
        {title.map((t) => <span key={t}>{t}</span>)}
      </div>
      <div className="flex-1 flex flex-col">
        {rows.map(([n, p, v, x]) => (
          <div key={n} className={`flex items-center ${rowH} ${Num}`}>
            <span className="w-[20px] pl-[5px] text-[#c0c0c0] shrink-0">{n}</span>
            <span className={`w-[144px] text-right shrink-0 ${p === "–" ? "text-[#e0e0e0]" : "text-[#ff3232]"}`}>{p}</span>
            <span className="w-[135px] text-right text-[#00d0f0] shrink-0">{v}</span>
            {x && <span className="ml-[32px] text-[16px] font-normal tracking-normal text-[#e02020]">{x}</span>}
          </div>
        ))}
      </div>
    </div>
  );
}

function RightPanel() {
  const stats: [string, string, string, string, string, string][] = [
    ["最新","13.32","r","开盘","13.32","r"],["涨跌","+1.21","r","最高","13.32","r"],["涨幅","+9.99%","r","最低","13.32","r"],["振幅","0.00%","c","量比","17.21","r"],["总手","76987","c","换手","5.21%","c"],
    ["金额","1.03亿","c","换手(实)","6.85%","c"],["市盈(静)","亏损","g","市盈(动)","亏损","g"],["总市值","19.67亿","c","流通值","19.67亿","c"],["涨停","13.32","r","跌停","10.90","n"],["外盘","0","r","内盘","76987","n"],
  ];
  const colour = (k: string) => (k === "r" ? "text-[#ff3232]" : k === "c" ? "text-[#00d0f0]" : k === "n" ? "text-[#00e000]" : "text-[#c0c0c0]");
  const ticks: [string, string, string][] = [
    ["09:50","1","1"],["09:50","7","3"],["09:50","50","2"],["09:50","130","14"],["09:50","40","7"],["09:50","110","16"],["09:51","30","3"],["09:51","11","4"],["09:51","40","3"],["09:51","5","1"],["09:51","5","1"],
    ["09:52","228","23"],["09:52","10","1"],["09:52","90","6"],["09:52","4","1"],["09:52","50","4"],["09:52","5","1"],["09:52","14","1"],
  ];
  const tabs = ["诊","分","筹","焰","指","财"];
  return (
    <div className="w-[388px] flex flex-col overflow-hidden shrink-0">
      <div className="h-[37px] relative flex items-center pl-[70px]">
        <span className="text-[33px] leading-[37px] font-bold text-[#00c8e4] font-['Liberation_Serif','Noto_Sans_CJK_SC',serif] whitespace-nowrap">香梨股份 <span className="text-[31px]">600506</span></span>
        <Settings className="absolute right-[1px] top-[3px] w-[25px] h-[25px] text-[#555] fill-[#555]" strokeWidth={2} />
      </div>
      <div className="flex-1 border-l border-l-[#8c0000] border-t border-t-[#8c0000] flex flex-col">
        <div className="h-[32px] flex items-center border-b border-b-[#8c0000] text-[#ff3232] shrink-0">
          <span className="w-[70px] pl-[3px] text-[23px] text-[#c0c0c0] shrink-0">委比</span>
          <span className={`w-[123px] text-right shrink-0 ${Num}`}>+100.00%</span>
          <span className={`w-[191px] text-right shrink-0 ${Num}`}>38911</span>
        </div>
        <Book title={["卖","盘"]} rowH="h-[30px]" rows={[["5","–","0"],["4","–","0"],["3","–","0"],["2","–","0"],["1","–","0"]]} />
        <Book title={["买","盘"]} rowH="h-[29px]" rows={[["1","13.32","38606","+40"],["2","13.31","56"],["3","13.30","202"],["4","13.28","6"],["5","13.25","41"]]} />
        <div className="h-[30px] flex items-center text-[18px] text-[#f0f080] border-b border-b-[#8c0000] whitespace-nowrap shrink-0">
          <span className="w-[176px] pl-[3px] shrink-0">在买盘13.20位置有</span>
          <span className="w-[58px] text-[#e02020] shrink-0">142手</span>
          <span className="w-[79px] shrink-0">买单!</span>
          <span>查看详细</span>
        </div>
        <div className="flex flex-col shrink-0">
          {stats.map((r) => (
            <div key={r[0]} className="h-[27px] flex items-center text-[23px] leading-[27px] text-[#c0c0c0] whitespace-nowrap">
              <span className="w-[100px] pl-[3px] shrink-0">{r[0]}</span>
              <span className={`w-[91px] text-right shrink-0 ${r[2] === "g" ? "" : Num} ${colour(r[2])}`}>{r[1]}</span>
              <span className="w-[106px] pl-[6px] shrink-0">{r[3]}</span>
              <span className={`w-[87px] text-right shrink-0 ${r[5] === "g" ? "" : Num} ${colour(r[5])}`}>{r[4]}</span>
            </div>
          ))}
        </div>
        <div className="h-[31px] flex items-center border-y border-y-[#8c0000] text-[19px] text-[#c0c0c0] shrink-0">
          <span className="w-[130px] pl-[3px] shrink-0">化学原料</span>
          <span className="w-[133px] text-right text-[#c02020] shrink-0">0.15%</span>
          <span className="ml-[5px] h-full border-l border-l-[#8c0000] pl-[14px] leading-[30px]">同行业比较</span>
        </div>
        <div className="flex flex-col pt-[1px] border-b border-b-[#8c0000] shrink-0">
          {ticks.map((t, i) => (
            <div key={i} className={`h-[28.2px] flex items-center ${Num}`}>
              <span className="w-[60px] pl-[3px] text-[#c0c0c0] shrink-0">{t[0]}</span>
              <span className="w-[133px] text-right text-[#ff3232] shrink-0">13.32</span>
              <span className="w-[98px] text-right text-[#00d800] shrink-0">{t[1]}</span>
              <span className="ml-[5px] w-[17px] shrink-0"><GreenDown /></span>
              <span className="w-[77px] text-right text-[#00d0f0] shrink-0">{t[2]}</span>
            </div>
          ))}
        </div>
      </div>
      <div className="h-[24px] pl-[4px] flex text-[18px] leading-[24px] text-[#222] shrink-0 mt-[1px]">
        <div className="w-[48px] bg-[#800000] text-white text-center [clip-path:polygon(0_0,100%_0,80%_100%,18%_100%)]">细</div>
        {tabs.map((t) => (
          <div key={t} className="w-[44px] -ml-[5px] bg-[#999] text-center [clip-path:polygon(0_0,100%_0,84%_100%,12%_100%)]">{t}</div>
        ))}
      </div>
    </div>
  );
}

function StatusRow() {
  const Yi = () => <span className="text-[24px] font-normal">亿</span>;
  return (
    <div className="h-[28px] mt-[2px] flex items-center border-y-2 border-y-[#800000] text-[20px] text-[#ff3232] whitespace-nowrap overflow-hidden shrink-0">
      <span className="w-[55px] pl-[4px] text-[22px] text-[#c0c0c0] shrink-0">沪</span>
      <span className="w-[143px] shrink-0">3133.44</span>
      <span className="w-[122px] shrink-0">+3.20</span>
      <span className="w-[130px] shrink-0">+0.10%</span>
      <span className="w-[105px] text-[#00d0f0] shrink-0">993.2<Yi /></span>
      <span className="w-[51px] h-full flex items-center pl-[7px] border-l border-l-[#800000] text-[22px] text-[#c0c0c0] shrink-0">深</span>
      <span className="w-[143px] shrink-0">11228.19</span>
      <span className="w-[129px] shrink-0">+34.60</span>
      <span className="w-[132px] shrink-0">+0.31%</span>
      <span className="w-[102px] text-[#00d0f0] shrink-0">1182<Yi /></span>
      <span className="w-[56px] h-full flex items-center pl-[6px] border-l border-l-[#800000] text-[22px] text-[#c0c0c0] shrink-0">创</span>
      <span className="w-[137px] shrink-0">2333.56</span>
      <span className="w-[129px] shrink-0">+11.08</span>
      <span className="w-[129px] shrink-0">+0.48%</span>
      <span className="w-[106px] text-[#00d0f0] shrink-0">325.7<Yi /></span>
      <span className="w-[105px] h-full flex items-center pl-[8px] border-l border-l-[#800000] text-[21px] text-[#c0c0c0] shrink-0">中小板指</span>
      <span className="w-[104px] shrink-0">7729.79</span>
      <span className="w-[97px] shrink-0">+20.15</span>
      <span className="w-[97px] shrink-0">+0.26%</span>
      <span className="text-[#00d0f0] shrink-0">124.1<Yi /></span>
    </div>
  );
}

function TickerRow() {
  const tabs: [string, string][] = [["留言","w-[48px]"],["解盘","w-[49px]"],["股市日记","w-[84px]"],["股灵通","w-[67px]"],["行情","w-[45px]"],["7*24小时","w-[85px]"],["智能助手","w-[82px]"]];
  return (
    <div className="h-[28px] flex items-center border-b border-b-[#800000] overflow-hidden shrink-0 whitespace-nowrap">
      {tabs.map(([t, c]) => (
        <span key={t} className={`h-full flex items-center justify-center border-r border-r-[#800000] text-[18px] text-[#c0c0c0] shrink-0 ${c} ${t[0] === "7" ? "text-[15px]" : ""}`}>{t}</span>
      ))}
      <span className="w-[657px] pl-[2px] text-[20px] font-bold text-[#ffff00] shrink-0">:48 财政部：4月份全国共销售彩票310.72亿元，同比增长6.8%</span>
      <span className="w-[377px] text-[20px] font-bold text-[#ffff00] shrink-0">09:47 港股抗疫概念股部分走低</span>
      <span className="w-[241px] text-[20px] font-bold text-[#ffff00] overflow-hidden shrink-0">同花顺可以做期货了零门槛期货</span>
      <div className="w-[205px] h-full bg-[#a8a8a8] text-[#222] text-[19px] flex items-center pl-[8px] shrink-0">代码/名称/简拼/功能</div>
      <span className="ml-[160px] text-[18px] text-[#c0c0c0] shrink-0">09:52:42</span>
    </div>
  );
}

export default function App() {
  return (
    <div className="relative w-[2160px] h-[1405px] bg-black overflow-hidden flex flex-col font-['Liberation_Sans','Noto_Sans_CJK_SC',sans-serif]">
      <TitleBar />
      <Toolbar />
      <div className="h-[1233px] flex shrink-0">
        <Sidebar />
        <ChartColumn />
        <RightPanel />
      </div>
      <StatusRow />
      <TickerRow />
      <div className="flex-1 flex bg-[#1f2f3c]">
        <div className="w-[1026px]" />
        <div className="w-[147px] bg-[#51606b]" />
        <div className="ml-[326px] mt-[1px] w-[6px] h-[5px] rounded-full bg-[#e06030]" />
      </div>
      <div className="absolute right-0 bottom-0 w-[220px] h-[57px] bg-white/95 flex flex-col">
        <div className="flex items-end pl-[3px] h-[29px]">
          <span className="text-[24px] leading-[28px] font-bold text-[#1a1aff]">股海网</span>
          <span className="ml-[3px] text-[17px] leading-[24px] text-[#222] whitespace-nowrap">股票软件资源分享</span>
        </div>
        <div className="pl-[4px] text-[22px] leading-[27px] font-bold text-[#f03010] whitespace-nowrap">Www.Guhai.com.cn</div>
      </div>
    </div>
  );
}
